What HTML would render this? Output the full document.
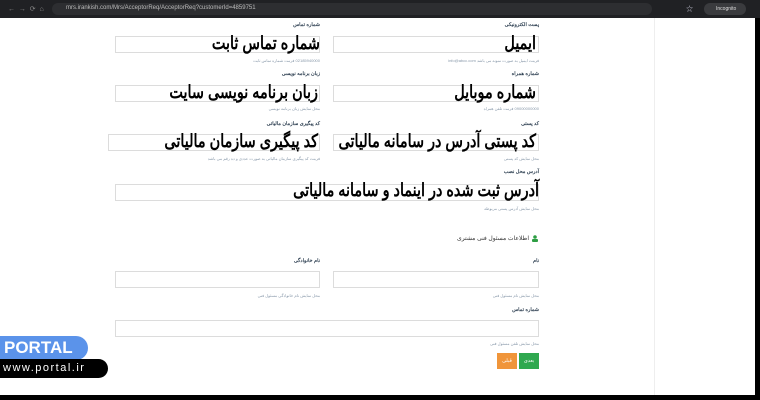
<!DOCTYPE html>
<html><head><meta charset="utf-8"><style>
*{margin:0;padding:0;box-sizing:border-box}
body{width:760px;height:400px;background:#000;position:relative;overflow:hidden;font-family:"Liberation Sans","Noto Sans CJK SC",sans-serif}
.a{position:absolute}
.page{left:0;top:18px;width:755px;height:377px;background:#fff}
.bar{left:0;top:0;width:760px;height:18px;background:#202124}
.lbl{font-size:5px;color:#2c3e50;direction:rtl;text-align:right;font-weight:bold}
.hlp{font-size:4px;color:#8a9aab;direction:rtl;text-align:right}
.inp{border:1px solid #dcdcdc;background:#fff;height:17px}
.big{font-size:18px;font-weight:bold;color:#000;direction:rtl;text-align:right;white-space:nowrap;line-height:20px;transform:scaleX(0.8);transform-origin:right center}
</style></head><body>
<div class="a bar"></div>
<div class="a" style="left:8px;top:5px;font-size:7px;color:#888">←&nbsp;&nbsp;→&nbsp;&nbsp;⟳&nbsp;&nbsp;⌂</div>
<div class="a" style="left:52px;top:3px;width:600px;height:12px;border-radius:6px;background:#2d2e31"></div>
<div class="a" style="left:66px;top:5px;font-size:6px;color:#bbb">mrs.irankish.com/Mrs/AcceptorReq/AcceptorReq?customerId=4859751</div>
<div class="a" style="left:686px;top:4px;font-size:7px;color:#ccd">☆</div>
<div class="a" style="left:704px;top:3px;width:42px;height:12px;border-radius:6px;background:#3a3b3e;color:#ddd;font-size:5px;line-height:12px;padding-left:12px">Incognito</div>
<div class="a page"></div>
<div class="a" style="left:654px;top:18px;width:1px;height:377px;background:#eee"></div>

<div class="a lbl" style="left:440px;top:22px;width:99px">پست الکترونیکی</div>
<div class="a inp" style="left:333px;top:36px;width:206px"></div>
<div class="a big" style="left:330px;top:33px;width:206px">ایمیل</div>
<div class="a hlp" style="left:333px;top:58px;width:206px">فرمت ایمیل به صورت نمونه می باشد info@abcc.com</div>

<div class="a lbl" style="left:220px;top:22px;width:100px">شماره تماس</div>
<div class="a inp" style="left:115px;top:36px;width:205px"></div>
<div class="a big" style="left:100px;top:33px;width:220px">شماره تماس ثابت</div>
<div class="a hlp" style="left:115px;top:58px;width:205px">02185940000 فرمت شماره تماس ثابت</div>

<div class="a lbl" style="left:440px;top:71px;width:99px">شماره همراه</div>
<div class="a inp" style="left:333px;top:85px;width:206px"></div>
<div class="a big" style="left:330px;top:82px;width:206px">شماره موبایل</div>
<div class="a hlp" style="left:333px;top:106px;width:206px">09000000000 فرمت تلفن همراه</div>

<div class="a lbl" style="left:220px;top:71px;width:100px">زبان برنامه نویسی</div>
<div class="a inp" style="left:115px;top:85px;width:205px"></div>
<div class="a big" style="left:100px;top:82px;width:218px">زبان برنامه نویسی سایت</div>
<div class="a hlp" style="left:115px;top:106px;width:205px">محل نمایش زبان برنامه نویسی</div>

<div class="a lbl" style="left:440px;top:121px;width:99px">کد پستی</div>
<div class="a inp" style="left:333px;top:134px;width:206px"></div>
<div class="a big" style="left:300px;top:131px;width:236px">کد پستی آدرس در سامانه مالیاتی</div>
<div class="a hlp" style="left:333px;top:156px;width:206px">محل نمایش کد پستی</div>

<div class="a lbl" style="left:200px;top:121px;width:120px">کد پیگیری سازمان مالیاتی</div>
<div class="a inp" style="left:108px;top:134px;width:212px"></div>
<div class="a big" style="left:100px;top:131px;width:218px">کد پیگیری سازمان مالیاتی</div>
<div class="a hlp" style="left:108px;top:156px;width:212px">فرمت کد پیگیری سازمان مالیاتی به صورت عددی و ده رقم می باشد</div>

<div class="a lbl" style="left:440px;top:169px;width:99px">آدرس محل نصب</div>
<div class="a inp" style="left:115px;top:184px;width:424px"></div>
<div class="a big" style="left:200px;top:180px;width:339px">آدرس ثبت شده در اینماد و سامانه مالیاتی</div>
<div class="a hlp" style="left:333px;top:206px;width:206px">محل نمایش آدرس پستی مربوطه</div>

<div class="a" style="left:532px;top:235px;width:6px;height:7px;line-height:0"><svg width="6" height="7" style="display:block"><circle cx="3" cy="2" r="1.8" fill="#2e9e44"/><rect x="0" y="4" width="6" height="3" rx="1" fill="#2e9e44"/></svg></div>
<div class="a" style="left:400px;top:235px;width:129px;font-size:6px;color:#333;direction:rtl;text-align:right">اطلاعات مسئول فنی مشتری</div>

<div class="a lbl" style="left:440px;top:258px;width:99px">نام</div>
<div class="a inp" style="left:333px;top:271px;width:206px"></div>
<div class="a hlp" style="left:333px;top:293px;width:206px">محل نمایش نام مسئول فنی</div>
<div class="a lbl" style="left:220px;top:258px;width:100px">نام خانوادگی</div>
<div class="a inp" style="left:115px;top:271px;width:205px"></div>
<div class="a hlp" style="left:115px;top:293px;width:205px">محل نمایش نام خانوادگی مسئول فنی</div>

<div class="a lbl" style="left:440px;top:307px;width:99px">شماره تماس</div>
<div class="a inp" style="left:115px;top:320px;width:424px"></div>
<div class="a hlp" style="left:333px;top:341px;width:206px">محل نمایش تلفن مسئول فنی</div>

<div class="a" style="left:519px;top:353px;width:20px;height:16px;background:#2fa84f;color:#fff;font-size:5px;text-align:center;line-height:16px">بعدی</div>
<div class="a" style="left:497px;top:353px;width:20px;height:16px;background:#f0953a;color:#fff;font-size:5px;text-align:center;line-height:16px">قبلی</div>

<div class="a" style="left:0;top:336px;width:88px;height:24px;background:#5b93ea;border-radius:0 12px 12px 0;color:#fff;font-weight:bold;font-size:17px;line-height:24px;padding-left:4px">PORTAL</div>
<div class="a" style="left:0;top:359px;width:108px;height:19px;background:#000;border-radius:0 10px 10px 0;color:#fff;font-size:11px;line-height:19px;padding-left:3px;letter-spacing:1.5px">www.portal.ir</div>
</body></html>
